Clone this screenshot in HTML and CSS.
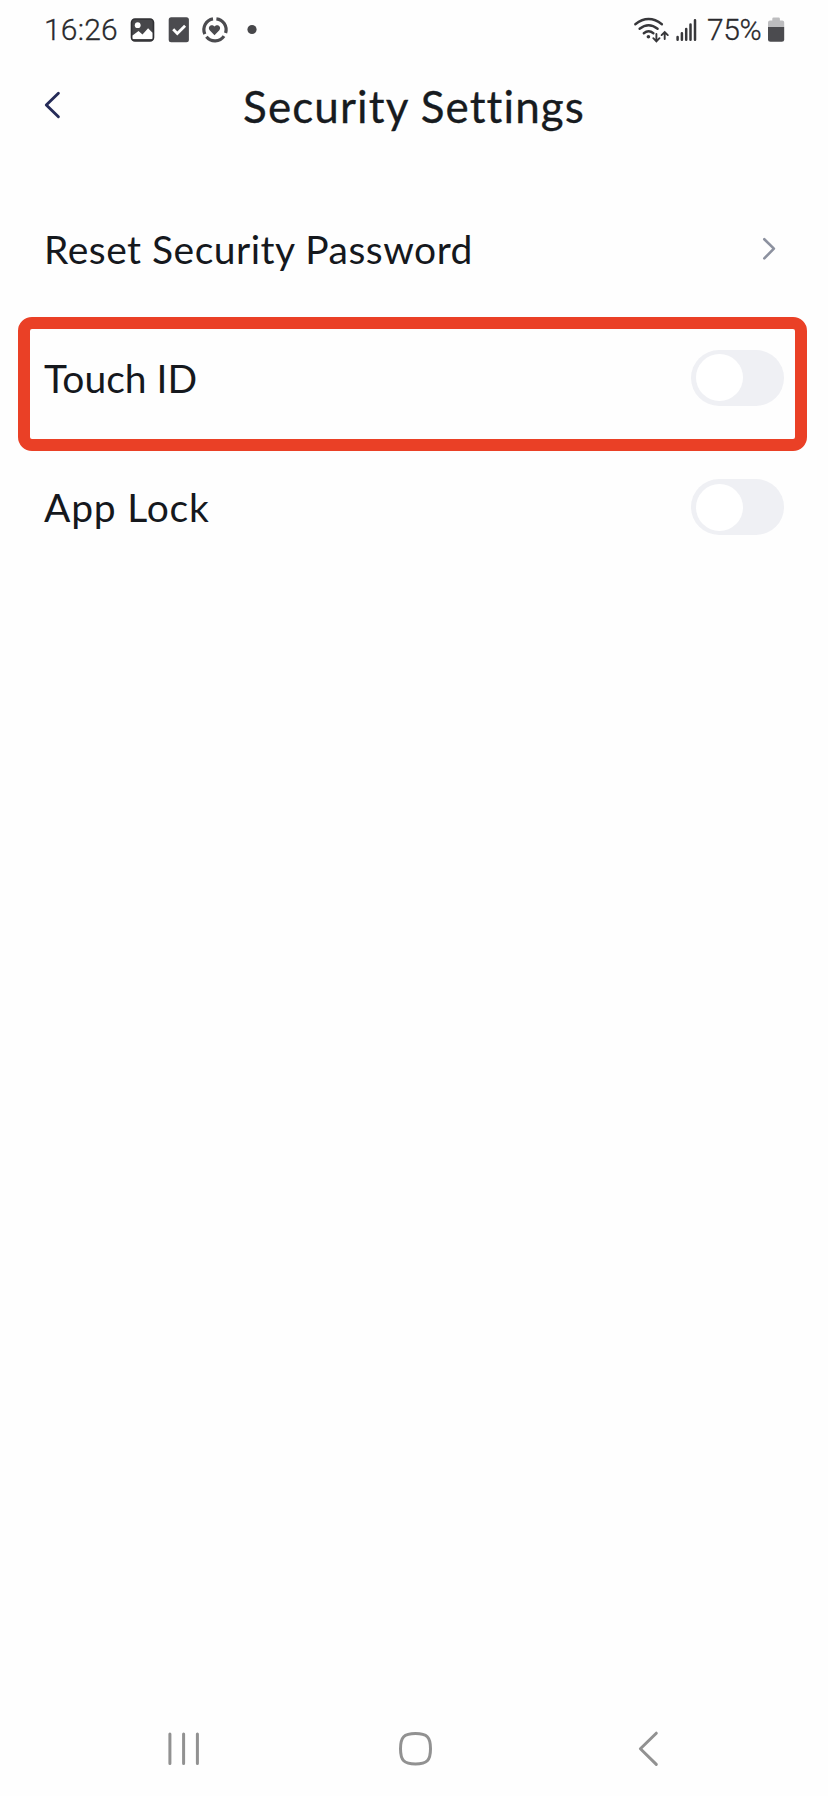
FILE: index.html
```html
<!DOCTYPE html>
<html lang="en">
<head>
<meta charset="utf-8">
<title>Security Settings</title>
<link rel="stylesheet" href="styles.css">
</head>
<body>
<div class="screen">
  <div class="status">
    <span class="time">16:26</span>
    <svg class="status-left" width="132" height="60" viewBox="128 0 132 60">
      <rect x="131.500" y="19" width="22" height="22" rx="3.5" fill="#47474a" stroke="#303033" stroke-width="1.6"/>
      <circle cx="137.700" cy="25.2" r="2.9" fill="#fff"/>
      <path d="M132.500 35.6l6-4.6 4 3.400 5.6-6.200 4.400 4.600v5.400q0 .8-.8.8h-18.400q-.8 0-.8-.8z" fill="#fff"/>
      <rect x="168.700" y="17.300" width="20.200" height="25" rx="2.500" fill="#4b4b4f"/>
      <path d="M173.200 29.300l4.100 4.200 7.800-7.800" fill="none" stroke="#fff" stroke-width="2.800"/>
      <g fill="none" stroke="#4b4b4f" stroke-width="3.200">
        <path d="M216.400 18.800a11 11 0 0 1 9.200 14.200"/>
        <path d="M224 36.200a11 11 0 0 1-17.600.6"/>
        <path d="M204.800 34.200a11 11 0 0 1 8.200-15.300"/>
      </g>
      <path d="M214.500 35.200l-4.600-4.600c-3.200-4 1.900-7.400 4.600-4 2.700-3.400 7.800 0 4.600 4z" fill="#4b4b4f"/>
      <circle cx="252" cy="29.500" r="4.600" fill="#47474a"/>
    </svg>
    <svg class="status-right" width="72" height="60" viewBox="630 0 72 60">
      <g fill="none" stroke="#37373a" stroke-width="2.400" stroke-linecap="round">
        <path d="M635.300 24.200q13.300-10.400 26.600 0M639.600 28.800q9-7 18 0M643.800 33.200q4.800-3.800 9.600 0"/>
        <path d="M656.400 34v7M653.300 38.200l3.100 3.100 3.100-3.100M664.700 39V32.300M661.600 35.100l3.100-3.100 3.100 3.100" stroke-width="1.900"/>
        <path d="M677.600 37v2.800M681.900 33.300v6.500M686.200 28.900v10.900M690.500 24.600v15.200M695 20.300v19.500" stroke-width="2.500"/>
      </g>
      <circle cx="648.400" cy="36.800" r="1.800" fill="#37373a"/>
    </svg>
    <span class="percent">75%</span>
    <svg class="battery" width="18" height="60" viewBox="767 0 18 60">
      <path d="M768 27v-4.500q0-2 2-2h2.300v-1.700q0-1.300 1.300-1.300h5q1.300 0 1.300 1.300v1.700h2.300q2 0 2 2V27z" fill="#bdbdbf"/>
      <path d="M768 27h16.200v12.300q0 2.500-2.500 2.500h-11.200q-2.500 0-2.500-2.500z" fill="#4b4b4f"/>
    </svg>
  </div>
  <header class="header">
    <svg class="back" width="20" height="30" viewBox="43 90 20 30"><path d="M58.400 93.200L46.300 105l12.100 11.800"/></svg>
    <h1 class="title">Security Settings</h1>
  </header>
  <main class="list">
    <div class="row"><span class="label reset">Reset Security Password</span>
      <svg class="go" width="20" height="28" viewBox="760 235 20 28"><path d="M764.300 239.200l9.600 9.400-9.600 9.800"/></svg>
    </div>
    <div class="row marked"><span class="label touch">Touch ID</span><span class="toggle"><span class="knob"></span></span></div>
    <div class="row"><span class="label lock">App Lock</span><span class="toggle"><span class="knob"></span></span></div>
  </main>
  <nav class="nav">
    <svg width="828" height="86" viewBox="0 1710 828 86">
      <path d="M169.900 1734v29.400M183.600 1734v29.400M197.400 1734v29.400"/>
      <path d="M415.500 1733.500c11.500 0 15 3.500 15 15.200s-3.500 15.200-15 15.200-15-3.500-15-15.200 3.500-15.200 15-15.200z"/>
      <path d="M656.300 1733.200L640.400 1748.800l15.900 15.600"/>
    </svg>
  </nav>
</div>
</body>
</html>
```
FILE: styles.css
```css
*, *::after { box-sizing: border-box; }
body { margin: 0; background: #fefefe; color: #171b20; font-family: Lato, sans-serif; }
svg { display: block; flex: none; }
.screen { height: 1796px; display: flex; flex-direction: column; overflow: hidden; }
.status { height: 60px; display: flex; align-items: center; padding-left: 44px; padding-right: 43px; font: 300 30px/60px Roboto, sans-serif; color: #29292c; white-space: nowrap; -webkit-text-stroke: 0.3px #29292c; }
.time { width: 84px; letter-spacing: 0.2px; }
.status-right { margin-left: auto; }
.percent { width: 65px; padding-left: 5px; letter-spacing: -0.4px; }
.header { height: 124px; padding: 30px 43px 0; display: grid; grid-template-columns: 20px 1fr 20px; align-items: start; }
.back path { fill: none; stroke: #252b58; stroke-width: 2.9px; stroke-linecap: round; stroke-linejoin: round; }
.title { margin: -9px 0 0; font-size: 44px; line-height: 50px; font-weight: 400; letter-spacing: 1.1px; font-variant-ligatures: none; text-align: center; white-space: nowrap; -webkit-text-stroke: 0.3px #171b20; }
.row { position: relative; height: 129.3px; display: flex; align-items: center; justify-content: space-between; padding: 0 44px; }
.label { font-size: 39px; line-height: 48px; white-space: nowrap; color: #15181d; }
.reset { letter-spacing: 0.5px; }
.lock { letter-spacing: 0.8px; }
.go { margin-right: 4px; }
.go path { fill: none; stroke: #8c919f; stroke-width: 2.6px; stroke-linecap: round; stroke-linejoin: round; }
.marked::after { content: ""; position: absolute; left: 17.5px; right: 21.5px; top: 4px; height: 134px; border: 12px solid #ea4026; border-radius: 14px; }
.toggle { width: 93px; height: 56px; padding: 4.5px; border-radius: 28px; background: #eff0f4; }
.knob { display: block; width: 47px; height: 47px; border-radius: 50%; background: #fff; }
.nav { margin-top: auto; height: 86px; }
.nav path { fill: none; stroke: #919191; stroke-width: 3px; stroke-linecap: round; stroke-linejoin: round; }
```
